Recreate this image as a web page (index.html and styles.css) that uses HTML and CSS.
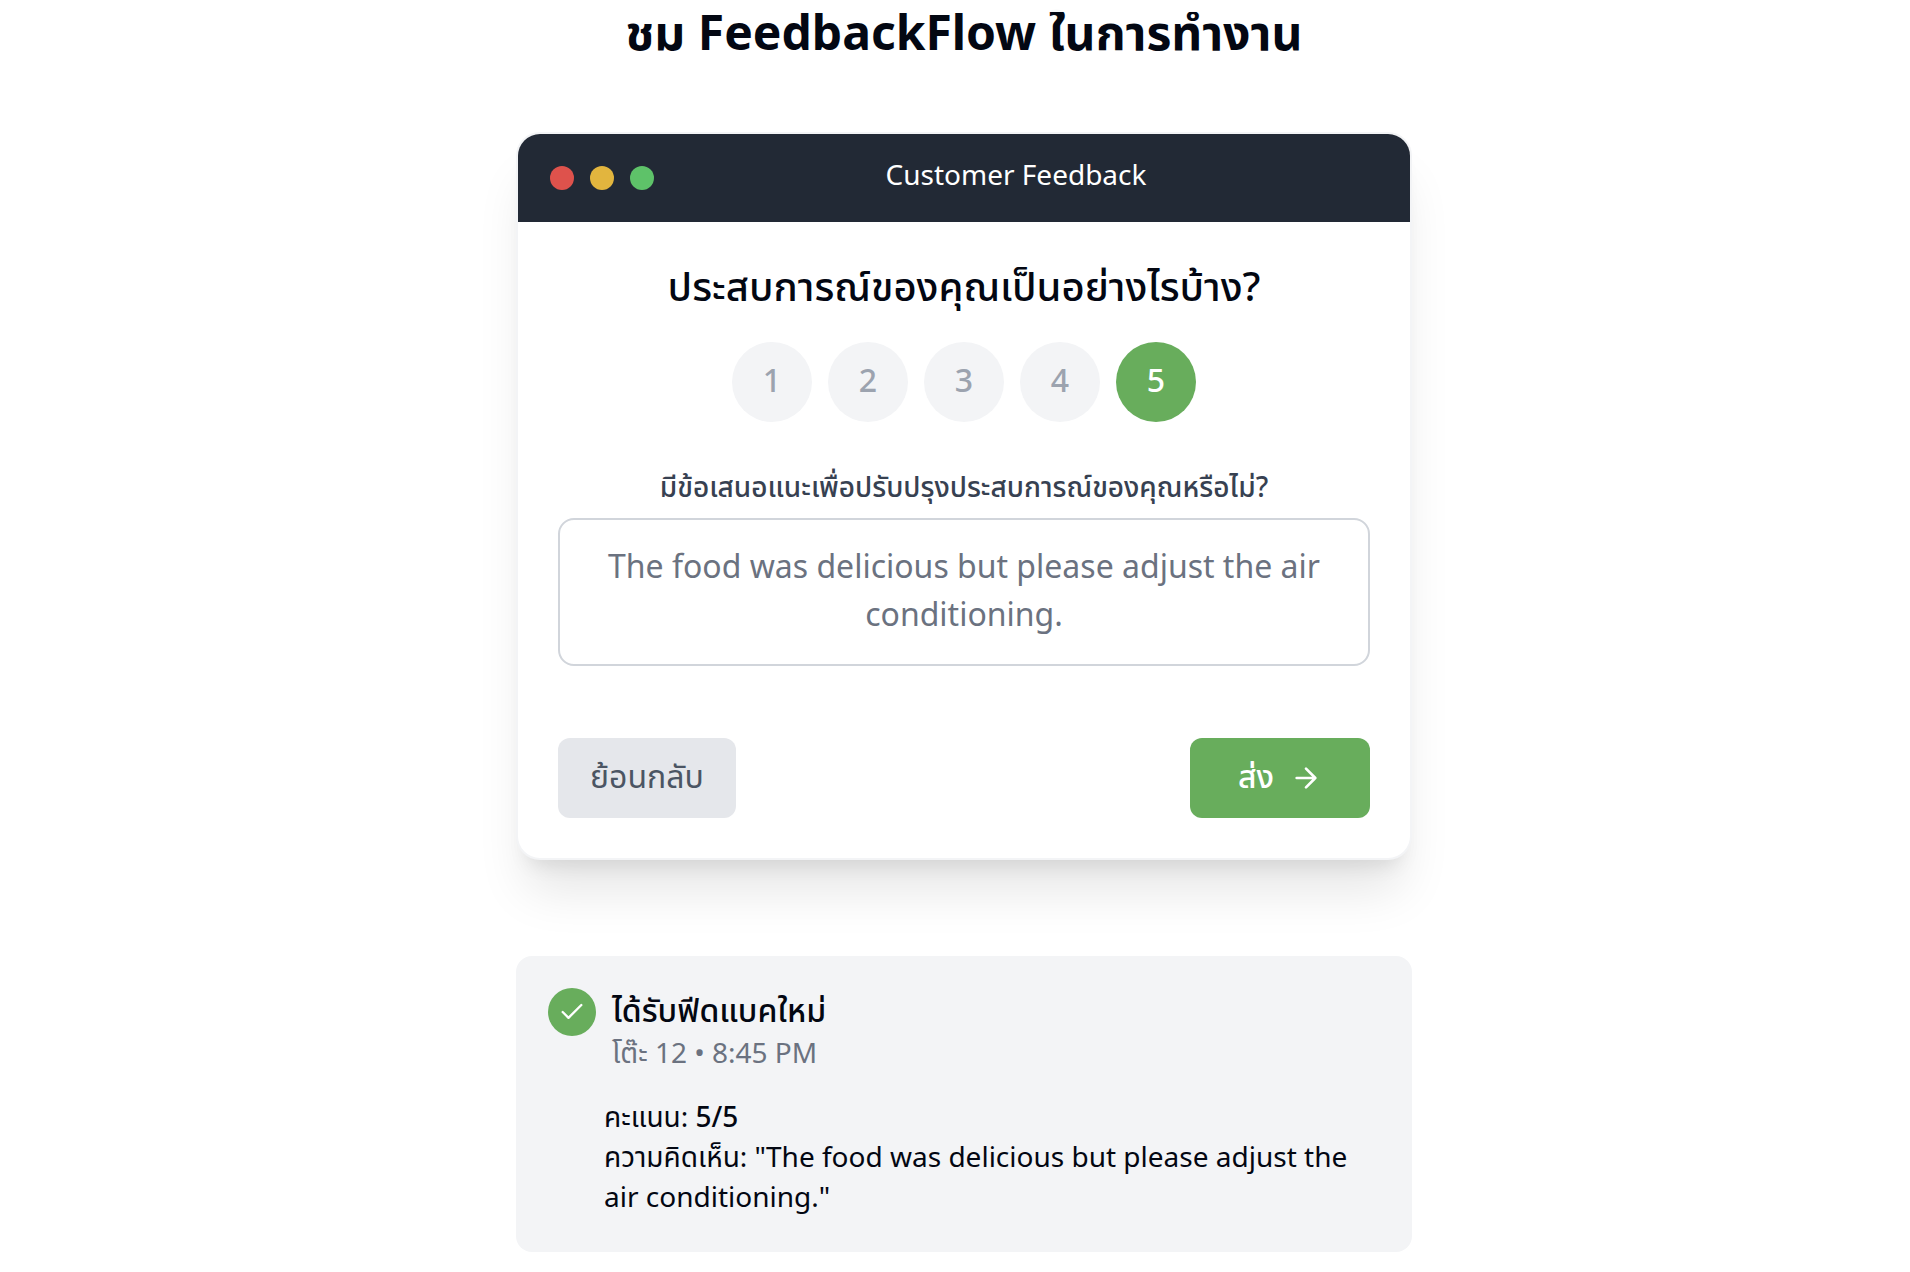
FILE: index.html
```html
<!DOCTYPE html>
<html lang="th">
<head>
<meta charset="utf-8">
<meta name="viewport" content="width=device-width, initial-scale=1">
<title>FeedbackFlow</title>
<link rel="stylesheet" href="styles.css">
</head>
<body>
<div class="topbar"></div>
<main class="demo">
  <h2 class="demo-title">ชม FeedbackFlow ในการทำงาน</h2>

  <form class="window">
    <header class="window-bar">
      <span class="dot dot-red"></span>
      <span class="dot dot-yellow"></span>
      <span class="dot dot-green"></span>
      <span class="window-title">Customer Feedback</span>
    </header>
    <div class="window-body">
      <h3 class="question">ประสบการณ์ของคุณเป็นอย่างไรบ้าง?</h3>
      <div class="scores">
        <button type="button" class="score">1</button>
        <button type="button" class="score">2</button>
        <button type="button" class="score">3</button>
        <button type="button" class="score">4</button>
        <button type="button" class="score score-active">5</button>
      </div>
      <label class="comment-label" for="comment">มีข้อเสนอแนะเพื่อปรับปรุงประสบการณ์ของคุณหรือไม่?</label>
      <textarea class="comment" id="comment" rows="2">The food was delicious but please adjust the air conditioning.</textarea>
      <div class="actions">
        <button type="button" class="btn btn-back"><span class="btn-text">ย้อนกลับ</span></button>
        <button type="button" class="btn btn-send">
          <span class="btn-text">ส่ง</span>
          <svg class="arrow" viewBox="0 0 24 24" aria-hidden="true"><path d="M5 12h14M12 5l7 7-7 7"/></svg>
        </button>
      </div>
    </div>
  </form>

  <section class="notice">
    <div class="notice-head">
      <span class="notice-badge"><svg class="check" viewBox="0 0 24 24" aria-hidden="true"><path d="M20 6 9 17l-5-5"/></svg></span>
      <div>
        <h3 class="notice-title">ได้รับฟีดแบคใหม่</h3>
        <p class="notice-meta">โต๊ะ 12 • 8:45 PM</p>
      </div>
    </div>
    <div class="notice-body">
      <p>คะแนน: <strong>5/5</strong></p>
      <p>ความคิดเห็น: "The food was delicious but please adjust the air conditioning."</p>
    </div>
  </section>
</main>
</body>
</html>
```
FILE: styles.css
```css
* { box-sizing: border-box; margin: 0; }

body {
  background: #fff;
  color: #030712;
  font-family: "Noto Sans", "Noto Sans Thai", sans-serif;
  font-size: 28px;
  line-height: 40px;
}

button, textarea { font: inherit; }

.topbar {
  position: fixed;
  top: 0;
  left: 0;
  right: 0;
  height: 12px;
  background: rgba(255, 255, 255, 0.95);
  backdrop-filter: blur(8px);
}

.demo {
  display: flex;
  flex-direction: column;
  align-items: center;
  padding: 4px 32px 20px 50px;
}

.demo-title {
  margin-bottom: 72px;
  font-size: 48px;
  line-height: 56px;
  font-weight: 700;
}

.window {
  width: 100%;
  max-width: 896px;
  margin-bottom: 96px;
  overflow: hidden;
  border: 2px solid #f3f4f6;
  border-radius: 24px;
  background: #fff;
  box-shadow: 0 40px 50px -10px rgba(0, 0, 0, 0.1), 0 16px 20px -12px rgba(0, 0, 0, 0.1);
}

.window-bar {
  display: flex;
  align-items: center;
  gap: 16px;
  padding: 20px 32px;
  background: #222935;
  color: #fff;
}

.dot { width: 24px; height: 24px; border-radius: 50%; }
.dot-red { background: #de524c; }
.dot-yellow { background: #e2b53e; }
.dot-green { background: #5ec269; }

.window-title { flex: 1; margin-left: -16px; padding-bottom: 8px; text-align: center; }

.window-body { padding: 40px; text-align: center; }

.question {
  margin-bottom: 32px;
  font-size: 40px;
  line-height: 48px;
  font-weight: 500;
}

.scores { display: flex; justify-content: center; gap: 16px; margin-bottom: 44px; }

.score {
  width: 80px;
  height: 80px;
  padding: 0 0 4px;
  border: 0;
  border-radius: 50%;
  background: #f3f4f6;
  color: #9ca3af;
  font-size: 32px;
  line-height: 48px;
  font-weight: 500;
}

.score-active { background: #68ad5c; color: #fff; }

.comment-label {
  display: block;
  margin-bottom: 12px;
  color: #374151;
  font-weight: 500;
}

.comment {
  display: block;
  width: 100%;
  margin-bottom: 72px;
  padding: 22px 32px 26px;
  border: 2px solid #d1d5db;
  border-radius: 16px;
  background: #fff;
  color: #6b7280;
  font-size: 32px;
  line-height: 48px;
  text-align: center;
  resize: none;
}

.actions { display: flex; justify-content: space-between; }

.btn {
  display: flex;
  align-items: center;
  gap: 16px;
  padding: 16px 32px;
  border: 0;
  border-radius: 12px;
  font-size: 32px;
  line-height: 44px;
}

.btn-text { padding-bottom: 4px; }
.btn-back { background: #e5e7eb; color: #4b5563; }
.btn-send { padding: 16px 48px; background: #68ad5c; color: #fff; font-weight: 500; }

.arrow, .check {
  fill: none;
  stroke: currentColor;
  stroke-width: 2;
  stroke-linecap: round;
  stroke-linejoin: round;
}

.arrow { width: 32px; height: 32px; }
.check { width: 28px; height: 28px; }

.notice {
  width: 100%;
  max-width: 896px;
  padding: 32px;
  border-radius: 16px;
  background: #f3f4f6;
}

.notice-head { display: flex; gap: 16px; margin-bottom: 24px; }

.notice-badge {
  display: flex;
  align-items: center;
  justify-content: center;
  width: 48px;
  height: 48px;
  border-radius: 50%;
  background: #68ad5c;
  color: #fff;
}

.notice-title { font-size: 32px; line-height: 44px; font-weight: 500; }
.notice-meta { color: #6b7280; }
.notice-body { padding: 0 0 4px 56px; }
.notice-body strong { font-weight: 500; }
```
